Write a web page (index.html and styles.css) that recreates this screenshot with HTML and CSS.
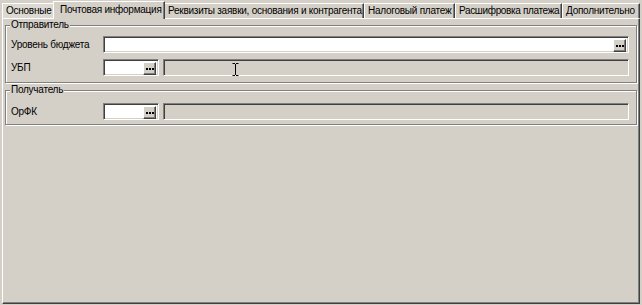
FILE: index.html
```html
<!DOCTYPE html>
<html lang="ru">
<head>
<meta charset="utf-8">
<title>Почтовая информация</title>
<link rel="stylesheet" href="styles.css">
</head>
<body>
<div class="window">
  <div class="tabs">
    <div class="tab t1">Основные</div>
    <div class="tab t2 active">Почтовая информация</div>
    <div class="tab t3">Реквизиты заявки, основания и контрагента</div>
    <div class="tab t4">Налоговый платеж</div>
    <div class="tab t5">Расшифровка платежа</div>
    <div class="tab t6">Дополнительно</div>
  </div>
  <div class="panel">
    <fieldset class="group g1">
      <legend>Отправитель</legend>
      <div class="row">
        <span class="label">Уровень бюджета</span>
        <div class="input wide"><span class="btn"><i></i><i></i><i></i></span></div>
      </div>
      <div class="row">
        <span class="label">УБП</span>
        <div class="input small"><span class="btn"><i></i><i></i><i></i></span></div>
        <div class="readonly"></div>
      </div>
    </fieldset>
    <fieldset class="group g2">
      <legend>Получатель</legend>
      <div class="row">
        <span class="label">ОрФК</span>
        <div class="input small"><span class="btn"><i></i><i></i><i></i></span></div>
        <div class="readonly"></div>
      </div>
    </fieldset>
    <svg class="cursor" width="7" height="13" viewBox="0 0 7 13"><path d="M0.5 0.5h2.5M4 0.5h2.5M3.5 1v11M0.5 12.5h2.5M4 12.5h2.5" stroke="#000" stroke-width="1" fill="none"/></svg>
  </div>
</div>
</body>
</html>
```
FILE: styles.css
```css
* { box-sizing: border-box; }
html, body { margin: 0; padding: 0; }
body {
  background: #d4d0c8;
  font-family: "Liberation Sans", Arial, sans-serif;
  font-size: 10px;
  letter-spacing: -0.25px;
  color: #000;
}
.window {
  width: 642px;
  height: 305px;
  background: #d4d0c8;
  display: flex;
  flex-direction: column;
}
.tabs {
  display: flex;
  align-items: flex-end;
  height: 18px;
  padding: 0 2px;
  flex: none;
}
.tab {
  height: 15px;
  line-height: 13px;
  padding: 0 0 0 3px;
  border-top: 1px solid #fff;
  border-left: 1px solid #fff;
  border-right: 1px solid #404040;
  box-shadow: inset -1px 0 #808080;
  background: #d4d0c8;
  white-space: nowrap;
  overflow: hidden;
  flex: none;
}
.t1 { width: 53px; background: #dcd9d2; }
.t2 { width: 112px; }
.t3 { width: 201px; padding-left: 4px; }
.t4 { width: 91px; }
.t5 { width: 107px; padding-left: 3px; letter-spacing: -0.35px; }
.t6 { width: 78px; }
.tab.active {
  height: 18px;
  margin: 0 -2px -1px -2px;
  padding-left: 6px;
  line-height: 15px;
  position: relative;
  z-index: 1;
}
.panel {
  position: relative;
  flex: 1;
  margin: 0 2px 1px 2px;
  border-top: 1px solid #fff;
  border-left: 1px solid #fff;
  border-right: 1px solid #404040;
  border-bottom: 1px solid #404040;
  box-shadow: inset -1px -1px #808080;
  padding: 0 2px 0 2px;
}
.group {
  margin: 0;
  border: 1px solid #808080;
  box-shadow: inset 1px 1px #fff, 1px 1px #fff;
  min-width: 0;
}
.group legend {
  padding: 0 1px;
  margin-left: -1px;
  line-height: 12px;
  font-size: 10px;
  background: #d4d0c8;
}
.g1 {
  margin-top: 0px;
  height: 64px;
  padding: 5px 7px 0 5px;
  display: flex;
  flex-direction: column;
  gap: 6px;
}
.g2 {
  margin-top: 1px;
  height: 41px;
  padding: 7px 7px 0 5px;
}
.row {
  display: flex;
  align-items: center;
  height: 17px;
}
.label {
  width: 92px;
  flex: none;
}
.input {
  position: relative;
  height: 17px;
  background: #fff;
  border: 1px solid;
  border-color: #808080 #fff #fff #808080;
  box-shadow: inset 1px 1px #404040, inset -1px -1px #d4d0c8;
  display: flex;
  justify-content: flex-end;
  padding: 2px 2px 2px 2px;
}
.input.wide { flex: 1; }
.input.small { width: 56px; flex: none; }
.readonly {
  flex: 1;
  margin-left: 4px;
  height: 17px;
  border: 1px solid;
  border-color: #808080 #fff #fff #808080;
  box-shadow: inset 1px 1px #404040, inset -1px -1px #d4d0c8;
  background: #d4d0c8;
}
.btn {
  width: 13px;
  height: 13px;
  background: #d4d0c8;
  border-top: 1px solid #fff;
  border-left: 1px solid #fff;
  border-right: 1px solid #404040;
  border-bottom: 1px solid #404040;
  box-shadow: inset -1px -1px #808080;
  display: flex;
  align-items: center;
  justify-content: center;
  gap: 1px;
  padding-top: 1px;
}
.btn i {
  display: block;
  width: 2px;
  height: 2px;
  background: #000;
}
.cursor {
  position: absolute;
  left: 229px;
  top: 44px;
}
```
